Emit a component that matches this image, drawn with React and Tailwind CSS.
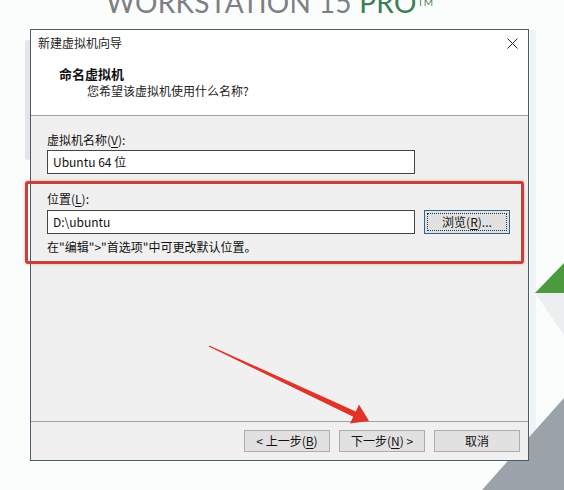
import React from "react";

const Key = ({ children }) => <span className="underline underline-offset-2">{children}</span>;

const WinButton = ({ children, className = "" }) => (
  <button
    className={`h-[22px] w-[86px] border border-[#adadad] bg-[#e1e1e1] text-[12px] leading-none text-[#111] ${className}`}
  >
    {children}
  </button>
);

const Field = ({ value }) => (
  <div className="flex h-[24px] w-[368px] items-center border border-[#444] bg-white pl-[5px] text-[12px] text-[#111]">
    {value}
  </div>
);

export default function App() {
  return (
    <div className="relative h-[490px] w-[564px] overflow-hidden bg-[#fbfcfc] font-['Noto_Sans_CJK_SC',sans-serif]">
      {/* background art */}
      <svg className="absolute inset-0" width="564" height="490" viewBox="0 0 564 490">
        <rect x="25" y="40" width="6" height="120" rx="3" fill="#e3e5e7" />
        <rect x="530" y="30" width="6" height="430" fill="#eef5f7" />
        <polygon points="535,293 564,263 564,293" fill="#4b9a3e" />
        <polygon points="535,293 564,293 564,335" fill="#eceeef" />
        <polygon points="564,398 564,490 482,490" fill="#9aa2aa" />
      </svg>

      {/* product heading, cropped at the top */}
      <div className="relative flex h-[29px] items-start">
        <div className="-mt-[12px] ml-[106px] flex items-start font-['Lato',sans-serif] text-[28px] leading-none tracking-[0.01em] text-[#7b8085]">
          <span>WORKSTATION 15&nbsp;</span>
          <span className="text-[#3a7d57]">PRO</span>
          <span className="ml-[1px] mt-[9px] text-[10px] text-[#4f8468]">TM</span>
        </div>
      </div>

      {/* wizard dialog */}
      <div className="relative ml-[30px] flex h-[432px] w-[499px] flex-col border border-[#4d5b68] bg-[#f0f0f0]">
        <div className="border-b border-[#a0a0a0] bg-white">
          <div className="flex h-[26px] items-center justify-between pl-[7px] pr-[10px]">
            <span className="text-[12px] text-[#222]">新建虚拟机向导</span>
            <svg width="11" height="11" viewBox="0 0 11 11">
              <path d="M0.5 0.5 L10.5 10.5 M10.5 0.5 L0.5 10.5" stroke="#222" strokeWidth="1" />
            </svg>
          </div>
          <div className="pb-[16px] pl-[28px] pt-[10px]">
            <div className="h-[16px] text-[13px] font-bold leading-[16px] text-[#111]">命名虚拟机</div>
            <div className="mt-[1px] pl-[28px] text-[12px] leading-[16px] text-[#222]">您希望该虚拟机使用什么名称?</div>
          </div>
        </div>

        <div className="flex-1 pl-[16px] pt-[16px] text-[12px] text-[#111]">
          <div className="h-[16px] leading-[16px]">
            虚拟机名称(<Key>V</Key>):
          </div>
          <div className="mt-[2px]">
            <Field value="Ubuntu 64 位" />
          </div>
          <div className="mt-[17px] h-[16px] leading-[16px]">
            位置(<Key>L</Key>):
          </div>
          <div className="mt-[3px] flex items-center">
            <Field value="D:\ubuntu" />
            <button className="ml-[9px] h-[24px] w-[86px] border border-[#2a6496] bg-[#e1e1e1] p-[2px] text-[12px] leading-none">
              <span className="flex h-full w-full items-center justify-center border border-dotted border-[#333]">
                浏览(<Key>R</Key>)...
              </span>
            </button>
          </div>
          <div className="mt-[5px] h-[16px] leading-[16px]">在&quot;编辑&quot;&gt;&quot;首选项&quot;中可更改默认位置。</div>
        </div>

        <div className="flex justify-end gap-[9px] border-t border-[#a0a0a0] pb-[8px] pr-[8px] pt-[8px]">
          <WinButton className="w-[85px]">
            &lt; 上一步(<Key>B</Key>)
          </WinButton>
          <WinButton>
            下一步(<Key>N</Key>) &gt;
          </WinButton>
          <WinButton>取消</WinButton>
        </div>
      </div>

      {/* annotation: red frame */}
      <div className="absolute left-[25px] top-[181px] h-[83px] w-[499px] rounded-[3px] border-[3px] border-[#c8403a] shadow-[0_0_3px_rgba(220,90,90,0.5)]" />

      {/* annotation: red arrow */}
      <svg className="absolute inset-0 pointer-events-none" width="564" height="490" viewBox="0 0 564 490">
        <polygon
          points="209.3,345.5 355.8,411.4 359,404.6 369,421 350,423.6 353.2,416.8 208.7,346.5"
          fill="#e2332a"
        />
      </svg>
    </div>
  );
}
